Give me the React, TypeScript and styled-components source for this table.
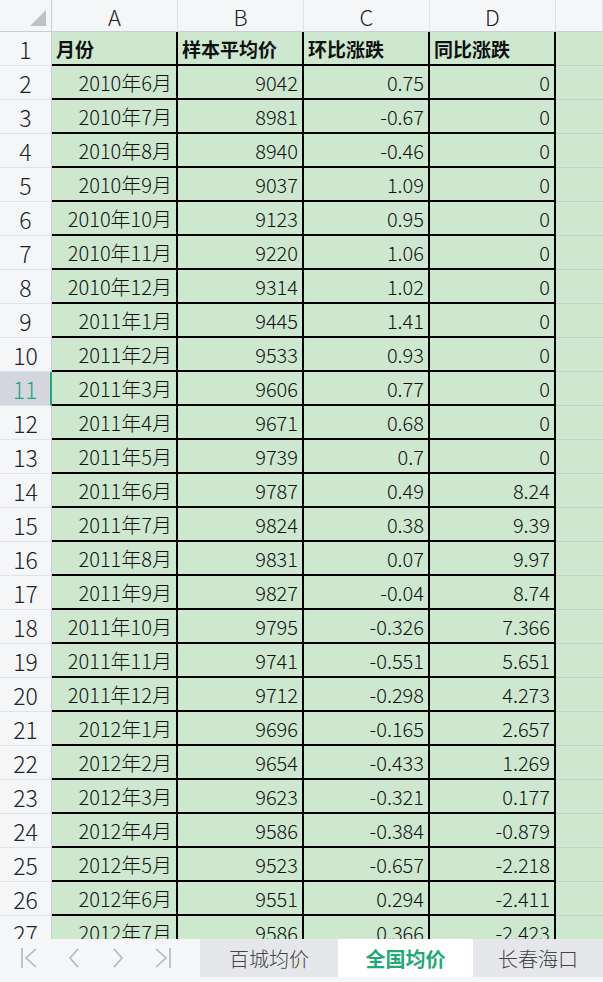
import React from 'react';
import styled, { createGlobalStyle, css } from 'styled-components';

const GlobalStyle = createGlobalStyle`
  html, body {
    margin: 0;
    padding: 0;
    background: #ffffff;
  }
  body {
    font-family: "Noto Sans CJK SC", "Noto Sans", sans-serif;
  }
`;

const GREEN = '#cde8cf';
const GRID = '#c9ced6';

const Page = styled.div`
  width: 603px;
  height: 982px;
  display: flex;
  flex-direction: column;
  overflow: hidden;
`;

const Sheet = styled.div`
  flex: 1;
  overflow: hidden;
  display: grid;
  grid-template-columns: 52px 126px 126px 126px 126px 1fr;
  grid-template-rows: 32px;
  grid-auto-rows: 34px;
  align-content: start;
`;

const Corner = styled.div`
  background: #f5f6f8;
  border-right: 1px solid ${GRID};
  border-bottom: 1px solid ${GRID};
  position: relative;
  &::after {
    content: '';
    position: absolute;
    right: 5px;
    bottom: 5px;
    border-style: solid;
    border-width: 0 0 16px 16px;
    border-color: transparent transparent #bfc1c5 transparent;
  }
`;

const ColHead = styled.div`
  background: #f5f6f8;
  border-right: 1px solid #dfe2e7;
  border-bottom: 1px solid ${GRID};
  display: flex;
  align-items: center;
  justify-content: center;
  font-size: 22px;
  font-weight: 300;
  color: #222;
`;

const RowHead = styled.div<{ $active?: boolean }>`
  background: ${({ $active }) => ($active ? '#d3d6dc' : '#f5f6f8')};
  border-right: ${({ $active }) => ($active ? '2px solid #1fa974' : `1px solid ${GRID}`)};
  border-bottom: 1px solid #dfe2e7;
  display: flex;
  align-items: center;
  justify-content: center;
  font-size: 23px;
  font-weight: 300;
  color: ${({ $active }) => ($active ? '#1fa974' : '#222')};
`;

const Cell = styled.div<{ $head?: boolean; $right?: boolean }>`
  background: ${GREEN};
  border-right: 2px solid #000;
  border-bottom: 2px solid #000;
  display: flex;
  align-items: center;
  padding: 0 4px;
  font-size: 20px;
  font-weight: 300;
  color: #111;
  white-space: nowrap;
  overflow: hidden;
  justify-content: ${({ $right }) => ($right ? 'flex-end' : 'flex-start')};
  ${({ $head }) =>
    $head &&
    css`
      font-weight: 700;
      font-size: 19px;
    `}
`;

const Blank = styled.div`
  background: ${GREEN};
  border-bottom: 1px solid #c3d2cc;
`;

const TabBar = styled.div`
  height: 38px;
  flex-shrink: 0;
  display: flex;
  background: #e6e7eb;
`;

const Nav = styled.div`
  width: 200px;
  flex-shrink: 0;
  background: #f5f6f8;
  display: flex;
  align-items: center;
  justify-content: space-between;
  padding: 0 28px 0 20px;
  box-sizing: border-box;
`;

const Tab = styled.div<{ $active?: boolean; $w?: number }>`
  width: ${({ $w }) => ($w ? `${$w}px` : 'auto')};
  flex: ${({ $w }) => ($w ? '0 0 auto' : '1')};
  display: flex;
  align-items: center;
  justify-content: center;
  font-size: 20px;
  font-weight: ${({ $active }) => ($active ? 700 : 300)};
  color: ${({ $active }) => ($active ? '#1fa974' : '#444')};
  background: ${({ $active }) => ($active ? '#ffffff' : 'transparent')};
`;

const BottomStrip = styled.div`
  height: 5px;
  flex-shrink: 0;
  background: #f5f6f8;
`;

const NavIcon = ({ kind }: { kind: 'first' | 'prev' | 'next' | 'last' }) => {
  const stroke = '#b4b6ba';
  return (
    <svg width="18" height="26" viewBox="0 0 18 26" fill="none" stroke={stroke} strokeWidth="1.6">
      {kind === 'first' && (
        <>
          <line x1="2" y1="3" x2="2" y2="23" />
          <polyline points="16,4 6,13 16,22" />
        </>
      )}
      {kind === 'prev' && <polyline points="13,4 5,13 13,22" />}
      {kind === 'next' && <polyline points="5,4 13,13 5,22" />}
      {kind === 'last' && (
        <>
          <polyline points="2,4 12,13 2,22" />
          <line x1="16" y1="3" x2="16" y2="23" />
        </>
      )}
    </svg>
  );
};

const rows: [string, string, string, string][] = [
  ['2010年6月', '9042', '0.75', '0'],
  ['2010年7月', '8981', '-0.67', '0'],
  ['2010年8月', '8940', '-0.46', '0'],
  ['2010年9月', '9037', '1.09', '0'],
  ['2010年10月', '9123', '0.95', '0'],
  ['2010年11月', '9220', '1.06', '0'],
  ['2010年12月', '9314', '1.02', '0'],
  ['2011年1月', '9445', '1.41', '0'],
  ['2011年2月', '9533', '0.93', '0'],
  ['2011年3月', '9606', '0.77', '0'],
  ['2011年4月', '9671', '0.68', '0'],
  ['2011年5月', '9739', '0.7', '0'],
  ['2011年6月', '9787', '0.49', '8.24'],
  ['2011年7月', '9824', '0.38', '9.39'],
  ['2011年8月', '9831', '0.07', '9.97'],
  ['2011年9月', '9827', '-0.04', '8.74'],
  ['2011年10月', '9795', '-0.326', '7.366'],
  ['2011年11月', '9741', '-0.551', '5.651'],
  ['2011年12月', '9712', '-0.298', '4.273'],
  ['2012年1月', '9696', '-0.165', '2.657'],
  ['2012年2月', '9654', '-0.433', '1.269'],
  ['2012年3月', '9623', '-0.321', '0.177'],
  ['2012年4月', '9586', '-0.384', '-0.879'],
  ['2012年5月', '9523', '-0.657', '-2.218'],
  ['2012年6月', '9551', '0.294', '-2.411'],
  ['2012年7月', '9586', '0.366', '-2.423'],
];

export default function App() {
  return (
    <Page>
      <GlobalStyle />
      <Sheet>
        <Corner />
        {['A', 'B', 'C', 'D'].map((c) => (
          <ColHead key={c}>{c}</ColHead>
        ))}
        <ColHead />

        <RowHead>1</RowHead>
        {['月份', '样本平均价', '环比涨跌', '同比涨跌'].map((h) => (
          <Cell key={h} $head>
            {h}
          </Cell>
        ))}
        <Blank />

        {rows.map((r, i) => (
          <React.Fragment key={i}>
            <RowHead $active={i + 2 === 11}>{i + 2}</RowHead>
            {r.map((v, j) => (
              <Cell key={j} $right>
                {v}
              </Cell>
            ))}
            <Blank />
          </React.Fragment>
        ))}
      </Sheet>
      <TabBar>
        <Nav>
          <NavIcon kind="first" />
          <NavIcon kind="prev" />
          <NavIcon kind="next" />
          <NavIcon kind="last" />
        </Nav>
        <Tab $w={138}>百城均价</Tab>
        <Tab $w={135} $active>
          全国均价
        </Tab>
        <Tab>长春海口</Tab>
      </TabBar>
      <BottomStrip />
    </Page>
  );
}
